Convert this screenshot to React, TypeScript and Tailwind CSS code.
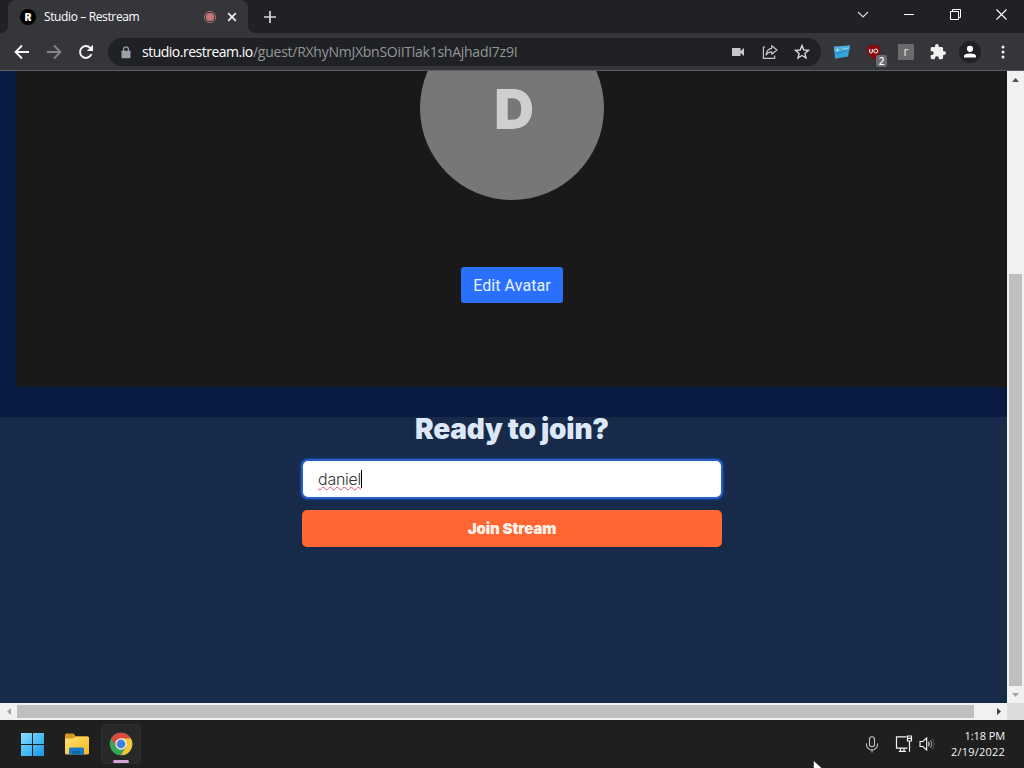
import React from "react";

const uiFont = "font-['Open_Sans','Noto_Sans',sans-serif]";

function Cell({ children, className = "w-8" }: { children: React.ReactNode; className?: string }) {
  return <div className={`flex h-full shrink-0 items-center justify-center ${className}`}>{children}</div>;
}

function TabStrip() {
  return (
    <div className="flex h-[33px] shrink-0 bg-[#202124] text-white">
      <svg className="shrink-0" width="8" height="33">
        <path d="M0 33 Q8 33 8 25 V33 Z" fill="#35363a" />
      </svg>
      <div className="flex h-[33px] w-60 items-center rounded-t-lg bg-[#35363a] pl-3">
        <div className="flex size-4 items-center justify-center rounded-full bg-black">
          <span className="font-['Inter',sans-serif] text-[10px] leading-none font-black">R</span>
        </div>
        <span className={`ml-2 w-[150px] whitespace-nowrap text-[12px] tracking-[-0.37px] ${uiFont}`}>Studio – Restream</span>
        <svg className="ml-2" width="16" height="16" viewBox="0 0 16 16" fill="none">
          <circle cx="8" cy="8" r="5.6" stroke="#a9706d" />
          <circle cx="8" cy="8" r="4.1" fill="#c47774" />
        </svg>
        <svg className="ml-[6px]" width="16" height="16" viewBox="0 0 16 16" stroke="#f1f1f1" strokeWidth="1.7">
          <path d="M4.2 4.2 11.8 11.8M11.8 4.2 4.2 11.8" />
        </svg>
      </div>
      <svg className="shrink-0" width="8" height="33">
        <path d="M0 25 Q0 33 8 33 H0 Z" fill="#35363a" />
      </svg>
      <Cell className="w-7">
        <svg width="14" height="14" viewBox="0 0 14 14" stroke="#d5d6d8" strokeWidth="1.7">
          <path d="M7 1V13M1 7H13" />
        </svg>
      </Cell>
      <div className="ml-auto flex h-[29px]">
        <Cell className="w-[46px]">
          <svg width="12" height="8" viewBox="0 0 12 8" fill="none" stroke="#ddd" strokeWidth="1.1">
            <path d="M1 1 6 6 11 1" />
          </svg>
        </Cell>
        <Cell className="w-[46px]">
          <div className="h-px w-2.5 bg-white" />
        </Cell>
        <Cell className="w-[46px]">
          <svg width="11" height="11" viewBox="0 0 11 11" fill="none" stroke="#fff">
            <path d="M.5 2.5H8.5V10.5H.5ZM2.5 2.5V.5H10.5V8.5H8.5" />
          </svg>
        </Cell>
        <Cell className="w-[46px]">
          <svg width="11" height="11" viewBox="0 0 11 11" stroke="#fff" strokeWidth="1.1">
            <path d="M.5.5 10.5 10.5M10.5.5.5 10.5" />
          </svg>
        </Cell>
      </div>
    </div>
  );
}

function Toolbar() {
  return (
    <div className="flex h-[37px] shrink-0 items-center bg-[#35363a] pl-1.5 pb-px pt-0.5">
      <Cell>
        <svg width="16" height="16" viewBox="0 0 16 16" fill="none" stroke="#f5f5f5" strokeWidth="1.9">
          <path d="M15 8H2.2M8 1.5 1.6 8 8 14.5" />
        </svg>
      </Cell>
      <Cell>
        <svg width="16" height="16" viewBox="0 0 16 16" fill="none" stroke="#85868a" strokeWidth="1.9">
          <path d="M1 8H13.8M8 1.5 14.4 8 8 14.5" />
        </svg>
      </Cell>
      <Cell>
        <svg width="16" height="16" viewBox="0 0 16 16" fill="none" stroke="#f5f5f5" strokeWidth="2">
          <path d="M13.4 10.2A5.9 5.9 0 1 1 12.2 3.9L14 5.8" />
          <path d="M15 .8V7H8.8Z" fill="#f5f5f5" stroke="none" />
        </svg>
      </Cell>
      <div className="ml-1.5 flex h-7 w-[713px] items-center rounded-full bg-[#202124] pl-[13px] pr-[3px]">
        <svg width="10" height="13" viewBox="0 0 10 13" fill="#9aa0a6">
          <path d="M1 4.7H9Q9.5 4.7 9.5 5.3V11.4Q9.5 12.2 8.7 12.2H1.3Q.5 12.2.5 11.4V5.3Q.5 4.7 1 4.7Z" />
          <path d="M2.6 5V3.2A2.4 2.4 0 0 1 7.4 3.2V5" fill="none" stroke="#9aa0a6" strokeWidth="1.3" />
        </svg>
        <span className={`ml-[11px] flex whitespace-nowrap text-[14px] leading-5 text-[#93969a] ${uiFont}`}>
          <span className="w-[111px] tracking-[-0.5px] text-white">studio.restream.io</span>
          <span className="tracking-[-0.26px]">/guest/RXhyNmJXbnSOiITlak1shAjhadI7z9I</span>
        </span>
        <div className="ml-auto flex h-full">
          <Cell>
            <svg width="14" height="10" viewBox="0 0 14 10" fill="#c5c7c9">
              <path d="M1 1H9.5V4L13 1V9L9.5 6V9H1Z" />
            </svg>
          </Cell>
          <Cell>
            <svg width="16" height="16" viewBox="0 0 16 16" fill="none" stroke="#c5c7c9" strokeWidth="1.2" strokeLinejoin="round">
              <path d="M3.2 3H1.4V14.4H12.7V11.5" />
              <path d="M9.7 1.7 15 6 9.7 10.2V7.8C7.2 7.7 5.3 8.8 4.1 11 4.4 7.2 6.1 4.8 9.7 4.3Z" />
            </svg>
          </Cell>
          <Cell>
            <svg width="16" height="16" viewBox="0 0 16 16" fill="none" stroke="#d5d7d9" strokeWidth="1.4">
              <path d="M8 1.6 9.8 6 14.5 6.4 10.9 9.4 12 14 8 11.5 4 14 5.1 9.4 1.5 6.4 6.2 6Z" />
            </svg>
          </Cell>
        </div>
      </div>
      <Cell className="ml-[5px] w-8">
        <svg width="18" height="16" viewBox="0 0 18 16">
          <path d="M1 2.8 17 1.5 15 12.5 2 14.8Z" fill="#35a2db" />
          <path d="M1 2.8 17 1.5 16.5 5 1.4 8Z" fill="#4eb0e2" />
          <path d="M4 10 13 6.5" stroke="#2383bd" />
          <circle cx="4.5" cy="6" r="1.2" fill="#d9e6b6" />
          <path d="M10 5.2 14.5 4.5" stroke="#a7dcf2" />
        </svg>
      </Cell>
      <Cell className="relative w-8">
        <svg width="16" height="16" viewBox="0 0 16 16">
          <path d="M8 0 14 3V9Q12 13 8 15.5 4 13 1 9V3Z" fill="#850b10" />
          <path d="M3.7 5V8Q3.7 9 4.7 9H5.3Q6.3 9 6.3 8V5" fill="none" stroke="#fff" />
          <circle cx="9.8" cy="7" r="2" fill="none" stroke="#fff" />
        </svg>
        <span className={`absolute top-[20px] left-[18px] flex h-3 w-[11px] items-center justify-center rounded-[2px] bg-[#6b6c70] text-[10px] leading-none font-semibold text-white ${uiFont}`}>2</span>
      </Cell>
      <Cell>
        <span className={`flex size-4 items-center justify-center bg-[#6b6c6c] pb-px text-[12px] leading-none text-[#e5e5e5] ${uiFont}`}>r</span>
      </Cell>
      <Cell>
        <svg width="16" height="16" viewBox="1 1 22 22" fill="#f1f1f1">
          <path d="M20.5 11H19V7c0-1.1-.9-2-2-2h-4V3.5a2.5 2.5 0 0 0-5 0V5H4c-1.1 0-2 .9-2 2v3.8h1.5a2.7 2.7 0 0 1 0 5.4H2V20c0 1.1.9 2 2 2h3.8v-1.5a2.7 2.7 0 0 1 5.4 0V22H17c1.1 0 2-.9 2-2v-4h1.5a2.5 2.5 0 0 0 0-5Z" />
        </svg>
      </Cell>
      <Cell>
        <svg width="22" height="22" viewBox="0 0 22 22" fill="#fff">
          <circle cx="11" cy="11" r="11" fill="#202124" />
          <circle cx="11" cy="7.8" r="3.1" />
          <path d="M5 16.5V15Q5 12.4 11 12.4T17 15V16.5Z" />
        </svg>
      </Cell>
      <Cell className="w-[34px]">
        <svg width="4" height="14" viewBox="0 0 4 14" fill="#f1f1f1">
          <circle cx="2" cy="2" r="1.5" />
          <circle cx="2" cy="7" r="1.5" />
          <circle cx="2" cy="12" r="1.5" />
        </svg>
      </Cell>
    </div>
  );
}

function Page() {
  return (
    <div className="flex h-[632px] w-[1007px] shrink-0 flex-col overflow-hidden bg-[#172a4a]">
      <div className="h-[346px] shrink-0 bg-[#091b43] pl-4">
        <div className="flex h-[316px] flex-col items-center bg-[#191919] pl-px">
          <div className="-mt-[55px] flex size-[184px] shrink-0 items-center justify-center rounded-full bg-[#777]">
            <span className="translate-x-[2px] translate-y-px font-['Inter',sans-serif] text-[55px] leading-none font-black text-[#cfcfcf]">D</span>
          </div>
          <button className="mt-[67px] h-9 w-[102px] shrink-0 rounded-[3px] bg-[#2970ff] pt-0.5 font-['Roboto',sans-serif] text-[16px] tracking-[0.08px] whitespace-nowrap text-[#e8f0ff]">
            Edit Avatar
          </button>
        </div>
      </div>
      <div className="flex flex-col items-center pl-[17px]">
        <h1 className="-mt-1 h-8 font-['Inter',sans-serif] text-[28px] leading-8 font-black tracking-[-0.25px] whitespace-nowrap text-[#dce7f7]">
          Ready to join?
        </h1>
        <div className="mt-[14px] flex h-10 w-[422px] items-center rounded-[7px] border-2 border-[#2860c8] bg-white pl-[15px] shadow-[0_0_2px_1px_#164391]">
          <span className="font-['Inter',sans-serif] text-[16px] leading-5 font-light tracking-[-0.25px] text-[#333] underline decoration-[#e05270] decoration-wavy decoration-[1px] underline-offset-[1px]">daniel</span>
          <span className="h-[18px] w-px bg-black" />
        </div>
        <button className="mt-[11px] h-[37px] w-[420px] rounded-[5px] bg-[#ff6633] pt-0.5 font-['Inter',sans-serif] text-[15px] font-black tracking-[-0.12px] text-[#fff4eb]">
          Join Stream
        </button>
      </div>
    </div>
  );
}

function VerticalBar() {
  return (
    <div className="flex w-[17px] shrink-0 flex-col items-center bg-[#f1f1f1]">
      <Cell className="max-h-[17px] w-[17px]">
        <svg width="7" height="4"><path d="M0 4 3.5 0 7 4Z" fill="#505050" /></svg>
      </Cell>
      <div className="mt-[186px] h-[412px] w-[13px] bg-[#bfbfbf]" />
      <Cell className="max-h-[17px] w-[17px]">
        <svg width="7" height="4"><path d="M0 0H7L3.5 4Z" fill="#a3a3a3" /></svg>
      </Cell>
    </div>
  );
}

function HorizontalBar() {
  return (
    <div className="flex h-[17px] shrink-0 items-center bg-[#f1f1f1]">
      <Cell className="w-[17px]">
        <svg width="4" height="7"><path d="M4 0V7L0 3.5Z" fill="#a3a3a3" /></svg>
      </Cell>
      <div className="h-[13px] w-[957px] bg-[#bfbfbf]" />
      <Cell className="ml-4 w-[17px]">
        <svg width="4" height="7"><path d="M0 0V7L4 3.5Z" fill="#404040" /></svg>
      </Cell>
      <div className="h-full w-[17px] bg-[#dcdcdc]" />
    </div>
  );
}

function Taskbar() {
  return (
    <div className="relative flex h-12 shrink-0 items-center overflow-hidden bg-[#1f1f1f]">
      <div className="ml-[21px] grid size-[23px] grid-cols-2 gap-px">
        <div className="bg-linear-to-br from-[#91ddff] to-[#44bdf6]" />
        <div className="bg-linear-to-br from-[#67cdfb] to-[#31aff0]" />
        <div className="bg-linear-to-br from-[#60cbfb] to-[#31aef1]" />
        <div className="bg-linear-to-br from-[#46bbf4] to-[#1495e7]" />
      </div>
      <svg className="ml-5" width="26" height="24" viewBox="0 0 26 24">
        <defs>
          <linearGradient id="folder" x1="0" y1="0" x2="1" y2="1">
            <stop stopColor="#ffe176" />
            <stop offset="1" stopColor="#f8b91b" />
          </linearGradient>
        </defs>
        <path d="M1 3Q1 1.5 2.5 1.5H9.5L12 4.5H23.5Q25 4.5 25 6V21H1Z" fill="#d59a17" />
        <path d="M1 6.5H9L12 4.5H23.5Q25 4.5 25 6V21Q25 22.5 23.5 22.5H2.5Q1 22.5 1 21Z" fill="url(#folder)" />
        <path d="M5 22.5V17Q5 15.5 6.5 15.5H18.5Q20 15.5 20 17V22.5Z" fill="#177bc9" />
        <path d="M8.5 19H16.5V22.5H8.5Z" fill="#1463a3" />
      </svg>
      <div className="ml-[11px] flex h-10 w-10 flex-col items-center rounded-[4px] border border-[#303030] bg-[#282828] pt-[7px]">
        <svg width="24" height="24" viewBox="0 0 24 24">
          <circle cx="12" cy="12" r="11.3" fill="#37a354" />
          <path d="M12 6.35H21.8A11.3 11.3 0 0 1 12 23.3L16.9 14.8Z" fill="#f5c53b" />
          <path d="M7.1 14.8 2.2 6.35A11.3 11.3 0 0 1 21.8 6.35H12Z" fill="#dc4b40" />
          <circle cx="12" cy="12" r="5.7" fill="#f3f3f3" />
          <circle cx="12" cy="12" r="4.4" fill="#427fdd" />
        </svg>
        <div className="mt-[4px] h-[3px] w-4 shrink-0 rounded-full bg-[#d6a2da]" />
      </div>
      <div className="ml-auto flex h-full items-center pr-[19px]">
        <svg width="14" height="17" viewBox="0 0 14 17" fill="none" stroke="#c9bfc8" strokeWidth="1.1">
          <rect x="4.5" y=".8" width="5" height="10" rx="2.5" />
          <path d="M1.5 7.5V8.5A5.5 5.5 0 0 0 12.5 8.5V7.5M7 14V16.5" />
        </svg>
        <svg className="ml-4" width="18" height="18" viewBox="0 0 18 18" fill="none" stroke="#f3f3f3" strokeWidth="1.2">
          <path d="M11.5 1.8H1.5V13.2H12.5M5.5 13.5V16M9 13.5V16M3.8 16.4H11" />
          <path d="M12.5 1H16.5V6H12.5ZM14.5 6V16.8M12.5 3.3H16.5" />
        </svg>
        <svg className="ml-[6px]" width="17" height="16" viewBox="0 0 17 16" fill="none" stroke="#f3f3f3" strokeWidth="1.1">
          <path d="M1 5.5H3.8L7.7 2V14L3.8 10.5H1Z" />
          <path d="M9.5 5.8Q11 8 9.5 10.2" />
          <path d="M11.4 4.2Q14 8 11.4 11.8" stroke="#999" />
          <path d="M13.3 2.6Q17 8 13.3 13.4" stroke="#505050" />
        </svg>
        <div className={`ml-[13px] flex w-[56px] flex-col items-end text-[11px] leading-4 whitespace-nowrap text-[#f5f5f5] ${uiFont}`}>
          <div className="tracking-[-0.1px]">1:18 PM</div>
          <div className="tracking-[0.2px]">2/19/2022</div>
        </div>
      </div>
      <svg className="absolute top-[40px] left-[813px]" width="12" height="18" viewBox="0 0 12 18">
        <path d="M.5.5V14L4 11 6.5 17 9 16 6.5 10H11Z" fill="#fff" stroke="#111" strokeWidth=".5" />
      </svg>
    </div>
  );
}

export default function App() {
  return (
    <div className="flex h-[768px] w-[1024px] flex-col overflow-hidden bg-[#202124]">
      <TabStrip />
      <Toolbar />
      <div className="h-px shrink-0 bg-[#5c5d60]" />
      <div className="flex h-[632px] shrink-0">
        <Page />
        <VerticalBar />
      </div>
      <HorizontalBar />
      <Taskbar />
    </div>
  );
}
